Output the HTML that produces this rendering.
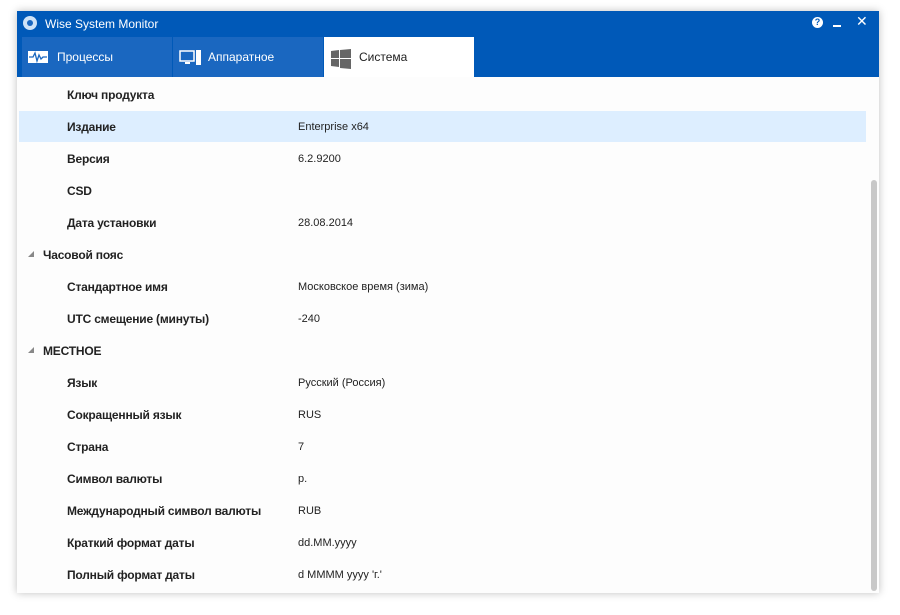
<!DOCTYPE html>
<html><head><meta charset="utf-8"><style>
body{margin:0;width:900px;height:615px;background:#fff;position:relative;font-family:"Liberation Sans",sans-serif;overflow:hidden}
.win{position:absolute;left:17px;top:11px;width:862px;height:582px;background:#fdfdfd;box-shadow:0 0 8px rgba(0,0,0,.25)}
.title{position:absolute;left:0;top:0;width:862px;height:66px;background:#0059b8}
.tt{position:absolute;left:28px;top:6px;color:#fff;font-size:12px}
.tab{position:absolute;top:26px;height:40px;background:#1a67c0;color:#fff;font-size:12px}
.tab span{position:absolute;left:35px;top:13px}
.row{position:absolute;left:2px;width:847px;height:32px}
.row b{position:absolute;top:9px;font-size:12px;color:#222;letter-spacing:-0.2px}
.row i{position:absolute;left:279px;top:10px;font-size:11px;font-style:normal;color:#222}
.tri{position:absolute;left:9px;top:12px;width:0;height:0;border-left:6px solid transparent;border-bottom:6px solid #888}
</style></head><body>
<div class="win">
<div class="title">
<div style="position:absolute;left:6px;top:5px;width:14px;height:14px;border-radius:50%;background:#cfe3f7"></div>
<div style="position:absolute;left:10px;top:9px;width:6px;height:6px;border-radius:50%;background:#1a67c0"></div>
<div class="tt">Wise System Monitor</div>
<div style="position:absolute;left:795px;top:6px;width:11px;height:11px;border-radius:50%;background:#fff;color:#0059b8;font-size:9px;font-weight:bold;text-align:center;line-height:11px">?</div>
<div style="position:absolute;left:816px;top:14px;width:8px;height:2px;background:#fff"></div>
<div style="position:absolute;left:839px;top:2px;color:#fff;font-size:14px">✕</div>
<div class="tab" style="left:5px;width:150px"><svg style="position:absolute;left:6px;top:14px" width="20" height="12"><rect width="20" height="12" fill="#fff"/><path d="M1 6h4l2-4 2 8 2-6 2 4 2-2h4" stroke="#1a67c0" fill="none" stroke-width="1.3"/></svg><span>Процессы</span></div>
<div class="tab" style="left:156px;width:150px"><svg style="position:absolute;left:6px;top:13px" width="24" height="16"><rect x="1" y="1" width="14" height="10" fill="none" stroke="#fff" stroke-width="1.5"/><rect x="6" y="12" width="5" height="2" fill="#fff"/><rect x="17" y="0" width="5" height="15" fill="#fff"/></svg><span>Аппаратное</span></div>
<div class="tab" style="left:307px;width:150px;background:#fff;color:#222"><svg style="position:absolute;left:7px;top:12px" width="20" height="20"><path d="M0 2l8-1v8H0zM9 1l11-1v9H9zM0 10h8v8l-8-1zM9 10h11v10l-11-1z" fill="#666"/></svg><span>Система</span></div>
</div>
<div style="position:absolute;left:2px;top:100px;width:847px;height:31px;background:#ddeeff"></div>
<div style="position:absolute;left:854px;top:169px;width:6px;height:411px;border-radius:3px;background:#c8c8c8"></div>
<div class="row" style="top:68px"><b style="left:48px">Ключ продукта</b></div>
<div class="row" style="top:100px"><b style="left:48px">Издание</b><i>Enterprise x64</i></div>
<div class="row" style="top:132px"><b style="left:48px">Версия</b><i>6.2.9200</i></div>
<div class="row" style="top:164px"><b style="left:48px">CSD</b></div>
<div class="row" style="top:196px"><b style="left:48px">Дата установки</b><i>28.08.2014</i></div>
<div class="row" style="top:228px"><div class="tri"></div><b style="left:24px">Часовой пояс</b></div>
<div class="row" style="top:260px"><b style="left:48px">Стандартное имя</b><i>Московское время (зима)</i></div>
<div class="row" style="top:292px"><b style="left:48px">UTC смещение (минуты)</b><i>-240</i></div>
<div class="row" style="top:324px"><div class="tri"></div><b style="left:24px">МЕСТНОЕ</b></div>
<div class="row" style="top:356px"><b style="left:48px">Язык</b><i>Русский (Россия)</i></div>
<div class="row" style="top:388px"><b style="left:48px">Сокращенный язык</b><i>RUS</i></div>
<div class="row" style="top:420px"><b style="left:48px">Страна</b><i>7</i></div>
<div class="row" style="top:452px"><b style="left:48px">Символ валюты</b><i>р.</i></div>
<div class="row" style="top:484px"><b style="left:48px">Международный символ валюты</b><i>RUB</i></div>
<div class="row" style="top:516px"><b style="left:48px">Краткий формат даты</b><i>dd.MM.yyyy</i></div>
<div class="row" style="top:548px"><b style="left:48px">Полный формат даты</b><i>d MMMM yyyy 'г.'</i></div>
</div>
</body></html>
